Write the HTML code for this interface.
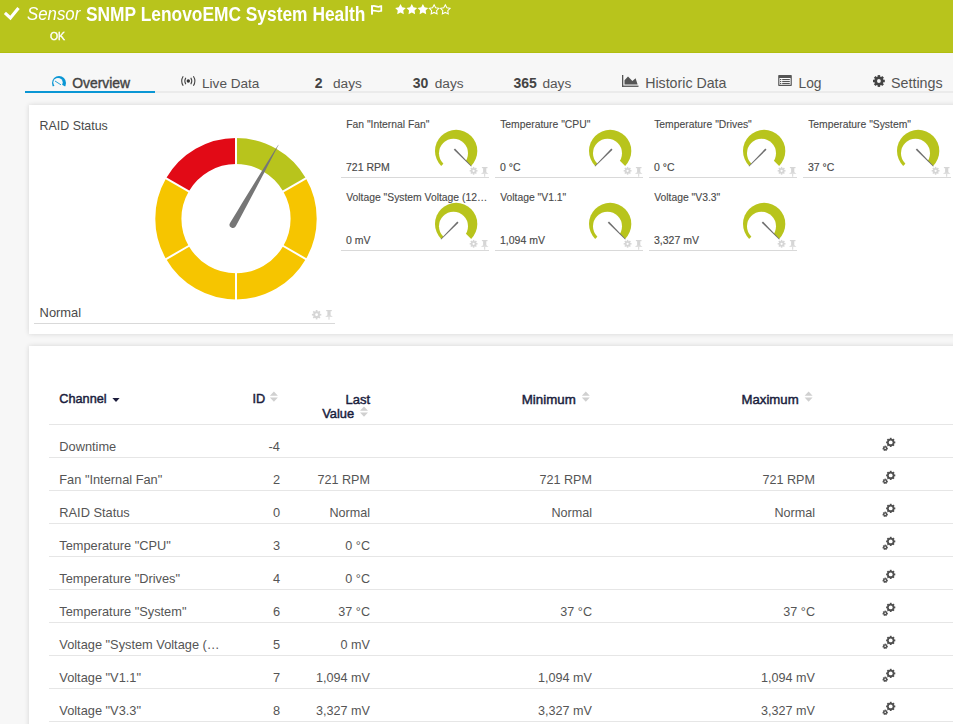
<!DOCTYPE html>
<html><head><meta charset="utf-8"><style>
html,body{margin:0;padding:0;}
body{width:953px;height:724px;overflow:hidden;background:#f7f7f7;position:relative;font-family:"Liberation Sans", sans-serif;}
.t{position:absolute;white-space:nowrap;font-family:"Liberation Sans", sans-serif;}
.panel{position:absolute;background:#fff;box-shadow:0 0 5px rgba(0,0,0,0.14);}
svg.ov{position:absolute;left:0;top:0;}
</style></head><body>
<div class="panel" style="left:29px;top:105px;width:940px;height:229px;"></div>
<div class="panel" style="left:29px;top:346px;width:940px;height:420px;"></div>
<svg class="ov" width="953" height="724" viewBox="0 0 953 724">
<rect x="0" y="0" width="953" height="53" fill="#b8c41c"/><rect x="0" y="52" width="953" height="1" fill="#b1be10"/><path d="M4.9 12.9 L10.4 18.0 L18.5 8.0" fill="none" stroke="#fff" stroke-width="3.1" stroke-linecap="butt" stroke-linejoin="miter"/><rect x="371" y="5.2" width="2" height="9.4" fill="#fff"/><path d="M372.9 6.1 C375 5.3 377 7.3 379 6.7 C380 6.4 380.7 6 381.3 6 V10.8 C380.6 10.9 380 11.4 378.6 11.4 C376.8 11.4 375 10.3 372.9 10.7" fill="none" stroke="#fff" stroke-width="1.7"/><polygon points="400.50,4.10 402.20,7.35 405.83,7.97 403.26,10.60 403.79,14.23 400.50,12.60 397.21,14.23 397.74,10.60 395.17,7.97 398.80,7.35" fill="#fff"/><polygon points="411.80,4.10 413.50,7.35 417.13,7.97 414.56,10.60 415.09,14.23 411.80,12.60 408.51,14.23 409.04,10.60 406.47,7.97 410.10,7.35" fill="#fff"/><polygon points="422.90,4.10 424.60,7.35 428.23,7.97 425.66,10.60 426.19,14.23 422.90,12.60 419.61,14.23 420.14,10.60 417.57,7.97 421.20,7.35" fill="#fff"/><polygon points="434.10,4.85 435.63,7.75 438.86,8.30 436.57,10.65 437.04,13.90 434.10,12.45 431.16,13.90 431.63,10.65 429.34,8.30 432.57,7.75" fill="none" stroke="#fff" stroke-width="1.05"/><polygon points="445.30,4.85 446.83,7.75 450.06,8.30 447.77,10.65 448.24,13.90 445.30,12.45 442.36,13.90 442.83,10.65 440.54,8.30 443.77,7.75" fill="none" stroke="#fff" stroke-width="1.05"/><rect x="25" y="91" width="928" height="2" fill="#ebebeb"/><rect x="25" y="91" width="130" height="2" fill="#0a96d4"/><defs><mask id="ovm" maskUnits="userSpaceOnUse" x="0" y="0" width="953" height="724"><path d="M59 83 L46 90.5 L46 70 L72 70 L72 90.5 Z" fill="#fff"/><circle cx="58" cy="82.6" r="4.7" fill="#000"/></mask></defs><circle cx="59" cy="83" r="7" fill="#0a96d4" mask="url(#ovm)"/><path d="M55.3 81.2 L60.6 84.6" stroke="#0a96d4" stroke-width="0.9" stroke-linecap="round"/><g fill="none" stroke="#444" stroke-width="1.1"><path d="M183.2 76.2 Q180.2 81 183.2 85.8"/><path d="M185.8 77.8 Q183.8 81 185.8 84.2"/><path d="M193.4 76.2 Q196.4 81 193.4 85.8"/><path d="M190.8 77.8 Q192.8 81 190.8 84.2"/></g><circle cx="188.3" cy="81" r="1.7" fill="#333"/><rect x="622" y="75" width="1.3" height="12" fill="#555"/><rect x="622" y="85.6" width="16.5" height="1.3" fill="#555"/><path d="M624.5 84.6 L624.5 80.2 L628 76.4 L632.4 81 L635.6 78.2 L637.6 84.6 Z" fill="#555"/><rect x="778.2" y="75" width="13.6" height="11" rx="0.8" fill="#555"/><rect x="779.4" y="78" width="11.2" height="6.8" fill="#fff"/><g fill="#555"><rect x="780" y="79" width="1.3" height="1.1"/><rect x="780" y="81" width="1.3" height="1.1"/><rect x="780" y="83" width="1.3" height="1.1"/><rect x="782.2" y="79" width="7.6" height="1.1"/><rect x="782.2" y="81" width="7.6" height="1.1"/><rect x="782.2" y="83" width="7.6" height="1.1"/></g><g fill="#444"><circle cx="878.9" cy="81" r="4.6"/><rect x="877.65" y="75.10" width="2.5" height="2.10" transform="rotate(0.0 878.9 81)"/><rect x="877.65" y="75.10" width="2.5" height="2.10" transform="rotate(45.0 878.9 81)"/><rect x="877.65" y="75.10" width="2.5" height="2.10" transform="rotate(90.0 878.9 81)"/><rect x="877.65" y="75.10" width="2.5" height="2.10" transform="rotate(135.0 878.9 81)"/><rect x="877.65" y="75.10" width="2.5" height="2.10" transform="rotate(180.0 878.9 81)"/><rect x="877.65" y="75.10" width="2.5" height="2.10" transform="rotate(225.0 878.9 81)"/><rect x="877.65" y="75.10" width="2.5" height="2.10" transform="rotate(270.0 878.9 81)"/><rect x="877.65" y="75.10" width="2.5" height="2.10" transform="rotate(315.0 878.9 81)"/></g><circle cx="878.9" cy="81" r="1.9" fill="#f7f7f7"/><path d="M236.00 138.00 A80.7 80.7 0 0 1 305.89 178.35 L283.28 191.40 A54.6 54.6 0 0 0 236.00 164.10 Z" fill="#b8c41c"/><path d="M305.89 178.35 A80.7 80.7 0 0 1 305.89 259.05 L283.28 246.00 A54.6 54.6 0 0 0 283.28 191.40 Z" fill="#f6c500"/><path d="M305.89 259.05 A80.7 80.7 0 0 1 236.00 299.40 L236.00 273.30 A54.6 54.6 0 0 0 283.28 246.00 Z" fill="#f6c500"/><path d="M236.00 299.40 A80.7 80.7 0 0 1 166.11 259.05 L188.72 246.00 A54.6 54.6 0 0 0 236.00 273.30 Z" fill="#f6c500"/><path d="M166.11 259.05 A80.7 80.7 0 0 1 166.11 178.35 L188.72 191.40 A54.6 54.6 0 0 0 188.72 246.00 Z" fill="#f6c500"/><path d="M166.11 178.35 A80.7 80.7 0 0 1 236.00 138.00 L236.00 164.10 A54.6 54.6 0 0 0 188.72 191.40 Z" fill="#e20a16"/><line x1="236.00" y1="166.10" x2="236.00" y2="136.00" stroke="#fff" stroke-width="2"/><line x1="281.55" y1="192.40" x2="307.62" y2="177.35" stroke="#fff" stroke-width="2"/><line x1="281.55" y1="245.00" x2="307.62" y2="260.05" stroke="#fff" stroke-width="2"/><line x1="236.00" y1="271.30" x2="236.00" y2="301.40" stroke="#fff" stroke-width="2"/><line x1="190.45" y1="245.00" x2="164.38" y2="260.05" stroke="#fff" stroke-width="2"/><line x1="190.45" y1="192.40" x2="164.38" y2="177.35" stroke="#fff" stroke-width="2"/><path d="M235.78 226.25 L239.38 219.49 L242.97 212.73 L246.56 205.98 L250.14 199.22 L253.72 192.45 L257.30 185.69 L260.87 178.92 L264.43 172.15 L267.98 165.37 L271.53 158.59 L275.05 151.79 L278.50 144.96 L278.30 144.84 L274.17 151.29 L270.11 157.78 L266.07 164.28 L262.04 170.78 L258.02 177.30 L254.00 183.81 L250.00 190.33 L245.99 196.85 L241.99 203.37 L238.00 209.90 L234.01 216.43 L230.02 222.95 A3.3 3.3 0 0 0 235.78 226.25 Z" fill="#767676"/><rect x="34" y="323" width="301" height="1" fill="#d9d9d9"/><g fill="#d6d6d6"><circle cx="316.6" cy="314.7" r="3.4"/><rect x="315.75" y="310.00" width="1.7" height="2.10" transform="rotate(0.0 316.6 314.7)"/><rect x="315.75" y="310.00" width="1.7" height="2.10" transform="rotate(45.0 316.6 314.7)"/><rect x="315.75" y="310.00" width="1.7" height="2.10" transform="rotate(90.0 316.6 314.7)"/><rect x="315.75" y="310.00" width="1.7" height="2.10" transform="rotate(135.0 316.6 314.7)"/><rect x="315.75" y="310.00" width="1.7" height="2.10" transform="rotate(180.0 316.6 314.7)"/><rect x="315.75" y="310.00" width="1.7" height="2.10" transform="rotate(225.0 316.6 314.7)"/><rect x="315.75" y="310.00" width="1.7" height="2.10" transform="rotate(270.0 316.6 314.7)"/><rect x="315.75" y="310.00" width="1.7" height="2.10" transform="rotate(315.0 316.6 314.7)"/></g><circle cx="316.6" cy="314.7" r="1.4" fill="#fff"/><g fill="#d6d6d6"><rect x="326.20" y="310.00" width="5.6" height="1.2"/><rect x="327.40" y="311.00" width="3.2" height="4.6"/><path d="M327.40 315.20 L325.20 316.80 L332.80 316.80 L330.60 315.20 Z"/><rect x="328.50" y="316.80" width="1" height="2.9"/></g><defs><mask id="sgm" maskUnits="userSpaceOnUse" x="-50" y="-50" width="100" height="100"><path d="M0 0 L-40 40 L-40 -40 L40 -40 L40 40 Z" fill="#fff"/><circle cx="-2.65" cy="2.35" r="14.5" fill="#000"/></mask></defs><g transform="translate(456.15 150.95)"><circle cx="0" cy="0" r="21.15" fill="#b8c41c" mask="url(#sgm)"/><path d="M-2.37 -1.17 L14.95 15.45 L15.45 14.95 L-1.17 -2.37 Z" fill="#6e6e6e"/></g><rect x="341" y="177" width="148" height="1" fill="#d9d9d9"/><g fill="#d6d6d6"><circle cx="473.6" cy="170.8" r="2.8"/><rect x="472.85" y="166.90" width="1.5" height="1.90" transform="rotate(0.0 473.6 170.8)"/><rect x="472.85" y="166.90" width="1.5" height="1.90" transform="rotate(45.0 473.6 170.8)"/><rect x="472.85" y="166.90" width="1.5" height="1.90" transform="rotate(90.0 473.6 170.8)"/><rect x="472.85" y="166.90" width="1.5" height="1.90" transform="rotate(135.0 473.6 170.8)"/><rect x="472.85" y="166.90" width="1.5" height="1.90" transform="rotate(180.0 473.6 170.8)"/><rect x="472.85" y="166.90" width="1.5" height="1.90" transform="rotate(225.0 473.6 170.8)"/><rect x="472.85" y="166.90" width="1.5" height="1.90" transform="rotate(270.0 473.6 170.8)"/><rect x="472.85" y="166.90" width="1.5" height="1.90" transform="rotate(315.0 473.6 170.8)"/></g><circle cx="473.6" cy="170.8" r="1.1" fill="#fff"/><g fill="#d6d6d6"><rect x="481.90" y="167.00" width="5.6" height="1.2"/><rect x="483.10" y="168.00" width="3.2" height="4.6"/><path d="M483.10 172.20 L480.90 173.80 L488.50 173.80 L486.30 172.20 Z"/><rect x="484.20" y="173.80" width="1" height="2.9"/></g><g transform="translate(610.15 150.95)"><circle cx="0" cy="0" r="21.15" fill="#b8c41c" mask="url(#sgm)"/><path d="M1.17 -2.37 L-15.45 14.95 L-14.95 15.45 L2.37 -1.17 Z" fill="#6e6e6e"/></g><rect x="495" y="177" width="148" height="1" fill="#d9d9d9"/><g fill="#d6d6d6"><circle cx="627.6" cy="170.8" r="2.8"/><rect x="626.85" y="166.90" width="1.5" height="1.90" transform="rotate(0.0 627.6 170.8)"/><rect x="626.85" y="166.90" width="1.5" height="1.90" transform="rotate(45.0 627.6 170.8)"/><rect x="626.85" y="166.90" width="1.5" height="1.90" transform="rotate(90.0 627.6 170.8)"/><rect x="626.85" y="166.90" width="1.5" height="1.90" transform="rotate(135.0 627.6 170.8)"/><rect x="626.85" y="166.90" width="1.5" height="1.90" transform="rotate(180.0 627.6 170.8)"/><rect x="626.85" y="166.90" width="1.5" height="1.90" transform="rotate(225.0 627.6 170.8)"/><rect x="626.85" y="166.90" width="1.5" height="1.90" transform="rotate(270.0 627.6 170.8)"/><rect x="626.85" y="166.90" width="1.5" height="1.90" transform="rotate(315.0 627.6 170.8)"/></g><circle cx="627.6" cy="170.8" r="1.1" fill="#fff"/><g fill="#d6d6d6"><rect x="635.90" y="167.00" width="5.6" height="1.2"/><rect x="637.10" y="168.00" width="3.2" height="4.6"/><path d="M637.10 172.20 L634.90 173.80 L642.50 173.80 L640.30 172.20 Z"/><rect x="638.20" y="173.80" width="1" height="2.9"/></g><g transform="translate(764.15 150.95)"><circle cx="0" cy="0" r="21.15" fill="#b8c41c" mask="url(#sgm)"/><path d="M1.17 -2.37 L-15.45 14.95 L-14.95 15.45 L2.37 -1.17 Z" fill="#6e6e6e"/></g><rect x="649" y="177" width="148" height="1" fill="#d9d9d9"/><g fill="#d6d6d6"><circle cx="781.6" cy="170.8" r="2.8"/><rect x="780.85" y="166.90" width="1.5" height="1.90" transform="rotate(0.0 781.6 170.8)"/><rect x="780.85" y="166.90" width="1.5" height="1.90" transform="rotate(45.0 781.6 170.8)"/><rect x="780.85" y="166.90" width="1.5" height="1.90" transform="rotate(90.0 781.6 170.8)"/><rect x="780.85" y="166.90" width="1.5" height="1.90" transform="rotate(135.0 781.6 170.8)"/><rect x="780.85" y="166.90" width="1.5" height="1.90" transform="rotate(180.0 781.6 170.8)"/><rect x="780.85" y="166.90" width="1.5" height="1.90" transform="rotate(225.0 781.6 170.8)"/><rect x="780.85" y="166.90" width="1.5" height="1.90" transform="rotate(270.0 781.6 170.8)"/><rect x="780.85" y="166.90" width="1.5" height="1.90" transform="rotate(315.0 781.6 170.8)"/></g><circle cx="781.6" cy="170.8" r="1.1" fill="#fff"/><g fill="#d6d6d6"><rect x="789.90" y="167.00" width="5.6" height="1.2"/><rect x="791.10" y="168.00" width="3.2" height="4.6"/><path d="M791.10 172.20 L788.90 173.80 L796.50 173.80 L794.30 172.20 Z"/><rect x="792.20" y="173.80" width="1" height="2.9"/></g><g transform="translate(918.15 150.95)"><circle cx="0" cy="0" r="21.15" fill="#b8c41c" mask="url(#sgm)"/><path d="M-2.37 -1.17 L14.95 15.45 L15.45 14.95 L-1.17 -2.37 Z" fill="#6e6e6e"/></g><rect x="803" y="177" width="148" height="1" fill="#d9d9d9"/><g fill="#d6d6d6"><circle cx="935.6" cy="170.8" r="2.8"/><rect x="934.85" y="166.90" width="1.5" height="1.90" transform="rotate(0.0 935.6 170.8)"/><rect x="934.85" y="166.90" width="1.5" height="1.90" transform="rotate(45.0 935.6 170.8)"/><rect x="934.85" y="166.90" width="1.5" height="1.90" transform="rotate(90.0 935.6 170.8)"/><rect x="934.85" y="166.90" width="1.5" height="1.90" transform="rotate(135.0 935.6 170.8)"/><rect x="934.85" y="166.90" width="1.5" height="1.90" transform="rotate(180.0 935.6 170.8)"/><rect x="934.85" y="166.90" width="1.5" height="1.90" transform="rotate(225.0 935.6 170.8)"/><rect x="934.85" y="166.90" width="1.5" height="1.90" transform="rotate(270.0 935.6 170.8)"/><rect x="934.85" y="166.90" width="1.5" height="1.90" transform="rotate(315.0 935.6 170.8)"/></g><circle cx="935.6" cy="170.8" r="1.1" fill="#fff"/><g fill="#d6d6d6"><rect x="943.90" y="167.00" width="5.6" height="1.2"/><rect x="945.10" y="168.00" width="3.2" height="4.6"/><path d="M945.10 172.20 L942.90 173.80 L950.50 173.80 L948.30 172.20 Z"/><rect x="946.20" y="173.80" width="1" height="2.9"/></g><g transform="translate(456.15 223.95)"><circle cx="0" cy="0" r="21.15" fill="#b8c41c" mask="url(#sgm)"/><path d="M1.17 -2.37 L-15.45 14.95 L-14.95 15.45 L2.37 -1.17 Z" fill="#6e6e6e"/></g><rect x="341" y="250" width="148" height="1" fill="#d9d9d9"/><g fill="#d6d6d6"><circle cx="473.6" cy="243.8" r="2.8"/><rect x="472.85" y="239.90" width="1.5" height="1.90" transform="rotate(0.0 473.6 243.8)"/><rect x="472.85" y="239.90" width="1.5" height="1.90" transform="rotate(45.0 473.6 243.8)"/><rect x="472.85" y="239.90" width="1.5" height="1.90" transform="rotate(90.0 473.6 243.8)"/><rect x="472.85" y="239.90" width="1.5" height="1.90" transform="rotate(135.0 473.6 243.8)"/><rect x="472.85" y="239.90" width="1.5" height="1.90" transform="rotate(180.0 473.6 243.8)"/><rect x="472.85" y="239.90" width="1.5" height="1.90" transform="rotate(225.0 473.6 243.8)"/><rect x="472.85" y="239.90" width="1.5" height="1.90" transform="rotate(270.0 473.6 243.8)"/><rect x="472.85" y="239.90" width="1.5" height="1.90" transform="rotate(315.0 473.6 243.8)"/></g><circle cx="473.6" cy="243.8" r="1.1" fill="#fff"/><g fill="#d6d6d6"><rect x="481.90" y="240.00" width="5.6" height="1.2"/><rect x="483.10" y="241.00" width="3.2" height="4.6"/><path d="M483.10 245.20 L480.90 246.80 L488.50 246.80 L486.30 245.20 Z"/><rect x="484.20" y="246.80" width="1" height="2.9"/></g><g transform="translate(610.15 223.95)"><circle cx="0" cy="0" r="21.15" fill="#b8c41c" mask="url(#sgm)"/><path d="M-2.37 -1.17 L14.95 15.45 L15.45 14.95 L-1.17 -2.37 Z" fill="#6e6e6e"/></g><rect x="495" y="250" width="148" height="1" fill="#d9d9d9"/><g fill="#d6d6d6"><circle cx="627.6" cy="243.8" r="2.8"/><rect x="626.85" y="239.90" width="1.5" height="1.90" transform="rotate(0.0 627.6 243.8)"/><rect x="626.85" y="239.90" width="1.5" height="1.90" transform="rotate(45.0 627.6 243.8)"/><rect x="626.85" y="239.90" width="1.5" height="1.90" transform="rotate(90.0 627.6 243.8)"/><rect x="626.85" y="239.90" width="1.5" height="1.90" transform="rotate(135.0 627.6 243.8)"/><rect x="626.85" y="239.90" width="1.5" height="1.90" transform="rotate(180.0 627.6 243.8)"/><rect x="626.85" y="239.90" width="1.5" height="1.90" transform="rotate(225.0 627.6 243.8)"/><rect x="626.85" y="239.90" width="1.5" height="1.90" transform="rotate(270.0 627.6 243.8)"/><rect x="626.85" y="239.90" width="1.5" height="1.90" transform="rotate(315.0 627.6 243.8)"/></g><circle cx="627.6" cy="243.8" r="1.1" fill="#fff"/><g fill="#d6d6d6"><rect x="635.90" y="240.00" width="5.6" height="1.2"/><rect x="637.10" y="241.00" width="3.2" height="4.6"/><path d="M637.10 245.20 L634.90 246.80 L642.50 246.80 L640.30 245.20 Z"/><rect x="638.20" y="246.80" width="1" height="2.9"/></g><g transform="translate(764.15 223.95)"><circle cx="0" cy="0" r="21.15" fill="#b8c41c" mask="url(#sgm)"/><path d="M-2.37 -1.17 L14.95 15.45 L15.45 14.95 L-1.17 -2.37 Z" fill="#6e6e6e"/></g><rect x="649" y="250" width="148" height="1" fill="#d9d9d9"/><g fill="#d6d6d6"><circle cx="781.6" cy="243.8" r="2.8"/><rect x="780.85" y="239.90" width="1.5" height="1.90" transform="rotate(0.0 781.6 243.8)"/><rect x="780.85" y="239.90" width="1.5" height="1.90" transform="rotate(45.0 781.6 243.8)"/><rect x="780.85" y="239.90" width="1.5" height="1.90" transform="rotate(90.0 781.6 243.8)"/><rect x="780.85" y="239.90" width="1.5" height="1.90" transform="rotate(135.0 781.6 243.8)"/><rect x="780.85" y="239.90" width="1.5" height="1.90" transform="rotate(180.0 781.6 243.8)"/><rect x="780.85" y="239.90" width="1.5" height="1.90" transform="rotate(225.0 781.6 243.8)"/><rect x="780.85" y="239.90" width="1.5" height="1.90" transform="rotate(270.0 781.6 243.8)"/><rect x="780.85" y="239.90" width="1.5" height="1.90" transform="rotate(315.0 781.6 243.8)"/></g><circle cx="781.6" cy="243.8" r="1.1" fill="#fff"/><g fill="#d6d6d6"><rect x="789.90" y="240.00" width="5.6" height="1.2"/><rect x="791.10" y="241.00" width="3.2" height="4.6"/><path d="M791.10 245.20 L788.90 246.80 L796.50 246.80 L794.30 245.20 Z"/><rect x="792.20" y="246.80" width="1" height="2.9"/></g><path d="M112.4 398 L119.6 398 L116 402 Z" fill="#1c1c3c"/><path d="M273.9 391.4 L277.9 395.7 L269.9 395.7 Z M269.9 397.4 L277.9 397.4 L273.9 401.7 Z" fill="#d0d0d0"/><path d="M364 406.4 L368 410.7 L360 410.7 Z M360 412.4 L368 412.4 L364 416.7 Z" fill="#d0d0d0"/><path d="M585.8 391.4 L589.8 395.7 L581.8 395.7 Z M581.8 397.4 L589.8 397.4 L585.8 401.7 Z" fill="#d0d0d0"/><path d="M808.6 391.4 L812.6 395.7 L804.6 395.7 Z M804.6 397.4 L812.6 397.4 L808.6 401.7 Z" fill="#d0d0d0"/><rect x="49" y="424" width="904" height="1" fill="#e6e6e6"/><rect x="49" y="457" width="904" height="1" fill="#e6e6e6"/><g fill="#505050"><circle cx="890.7" cy="442.4" r="3.7"/><rect x="889.80" y="437.80" width="1.8" height="1.70" transform="rotate(0.0 890.7 442.4)"/><rect x="889.80" y="437.80" width="1.8" height="1.70" transform="rotate(45.0 890.7 442.4)"/><rect x="889.80" y="437.80" width="1.8" height="1.70" transform="rotate(90.0 890.7 442.4)"/><rect x="889.80" y="437.80" width="1.8" height="1.70" transform="rotate(135.0 890.7 442.4)"/><rect x="889.80" y="437.80" width="1.8" height="1.70" transform="rotate(180.0 890.7 442.4)"/><rect x="889.80" y="437.80" width="1.8" height="1.70" transform="rotate(225.0 890.7 442.4)"/><rect x="889.80" y="437.80" width="1.8" height="1.70" transform="rotate(270.0 890.7 442.4)"/><rect x="889.80" y="437.80" width="1.8" height="1.70" transform="rotate(315.0 890.7 442.4)"/></g><circle cx="890.7" cy="442.4" r="1.9" fill="#fff"/><g fill="#505050"><circle cx="885.2" cy="448.29999999999995" r="2.1"/><rect x="884.60" y="445.60" width="1.2" height="1.40" transform="rotate(0.0 885.2 448.29999999999995)"/><rect x="884.60" y="445.60" width="1.2" height="1.40" transform="rotate(51.42857142857143 885.2 448.29999999999995)"/><rect x="884.60" y="445.60" width="1.2" height="1.40" transform="rotate(102.85714285714286 885.2 448.29999999999995)"/><rect x="884.60" y="445.60" width="1.2" height="1.40" transform="rotate(154.28571428571428 885.2 448.29999999999995)"/><rect x="884.60" y="445.60" width="1.2" height="1.40" transform="rotate(205.71428571428572 885.2 448.29999999999995)"/><rect x="884.60" y="445.60" width="1.2" height="1.40" transform="rotate(257.14285714285717 885.2 448.29999999999995)"/><rect x="884.60" y="445.60" width="1.2" height="1.40" transform="rotate(308.57142857142856 885.2 448.29999999999995)"/></g><circle cx="885.2" cy="448.29999999999995" r="0.8" fill="#fff"/><rect x="49" y="490" width="904" height="1" fill="#e6e6e6"/><g fill="#505050"><circle cx="890.7" cy="475.4" r="3.7"/><rect x="889.80" y="470.80" width="1.8" height="1.70" transform="rotate(0.0 890.7 475.4)"/><rect x="889.80" y="470.80" width="1.8" height="1.70" transform="rotate(45.0 890.7 475.4)"/><rect x="889.80" y="470.80" width="1.8" height="1.70" transform="rotate(90.0 890.7 475.4)"/><rect x="889.80" y="470.80" width="1.8" height="1.70" transform="rotate(135.0 890.7 475.4)"/><rect x="889.80" y="470.80" width="1.8" height="1.70" transform="rotate(180.0 890.7 475.4)"/><rect x="889.80" y="470.80" width="1.8" height="1.70" transform="rotate(225.0 890.7 475.4)"/><rect x="889.80" y="470.80" width="1.8" height="1.70" transform="rotate(270.0 890.7 475.4)"/><rect x="889.80" y="470.80" width="1.8" height="1.70" transform="rotate(315.0 890.7 475.4)"/></g><circle cx="890.7" cy="475.4" r="1.9" fill="#fff"/><g fill="#505050"><circle cx="885.2" cy="481.29999999999995" r="2.1"/><rect x="884.60" y="478.60" width="1.2" height="1.40" transform="rotate(0.0 885.2 481.29999999999995)"/><rect x="884.60" y="478.60" width="1.2" height="1.40" transform="rotate(51.42857142857143 885.2 481.29999999999995)"/><rect x="884.60" y="478.60" width="1.2" height="1.40" transform="rotate(102.85714285714286 885.2 481.29999999999995)"/><rect x="884.60" y="478.60" width="1.2" height="1.40" transform="rotate(154.28571428571428 885.2 481.29999999999995)"/><rect x="884.60" y="478.60" width="1.2" height="1.40" transform="rotate(205.71428571428572 885.2 481.29999999999995)"/><rect x="884.60" y="478.60" width="1.2" height="1.40" transform="rotate(257.14285714285717 885.2 481.29999999999995)"/><rect x="884.60" y="478.60" width="1.2" height="1.40" transform="rotate(308.57142857142856 885.2 481.29999999999995)"/></g><circle cx="885.2" cy="481.29999999999995" r="0.8" fill="#fff"/><rect x="49" y="523" width="904" height="1" fill="#e6e6e6"/><g fill="#505050"><circle cx="890.7" cy="508.4" r="3.7"/><rect x="889.80" y="503.80" width="1.8" height="1.70" transform="rotate(0.0 890.7 508.4)"/><rect x="889.80" y="503.80" width="1.8" height="1.70" transform="rotate(45.0 890.7 508.4)"/><rect x="889.80" y="503.80" width="1.8" height="1.70" transform="rotate(90.0 890.7 508.4)"/><rect x="889.80" y="503.80" width="1.8" height="1.70" transform="rotate(135.0 890.7 508.4)"/><rect x="889.80" y="503.80" width="1.8" height="1.70" transform="rotate(180.0 890.7 508.4)"/><rect x="889.80" y="503.80" width="1.8" height="1.70" transform="rotate(225.0 890.7 508.4)"/><rect x="889.80" y="503.80" width="1.8" height="1.70" transform="rotate(270.0 890.7 508.4)"/><rect x="889.80" y="503.80" width="1.8" height="1.70" transform="rotate(315.0 890.7 508.4)"/></g><circle cx="890.7" cy="508.4" r="1.9" fill="#fff"/><g fill="#505050"><circle cx="885.2" cy="514.3" r="2.1"/><rect x="884.60" y="511.60" width="1.2" height="1.40" transform="rotate(0.0 885.2 514.3)"/><rect x="884.60" y="511.60" width="1.2" height="1.40" transform="rotate(51.42857142857143 885.2 514.3)"/><rect x="884.60" y="511.60" width="1.2" height="1.40" transform="rotate(102.85714285714286 885.2 514.3)"/><rect x="884.60" y="511.60" width="1.2" height="1.40" transform="rotate(154.28571428571428 885.2 514.3)"/><rect x="884.60" y="511.60" width="1.2" height="1.40" transform="rotate(205.71428571428572 885.2 514.3)"/><rect x="884.60" y="511.60" width="1.2" height="1.40" transform="rotate(257.14285714285717 885.2 514.3)"/><rect x="884.60" y="511.60" width="1.2" height="1.40" transform="rotate(308.57142857142856 885.2 514.3)"/></g><circle cx="885.2" cy="514.3" r="0.8" fill="#fff"/><rect x="49" y="556" width="904" height="1" fill="#e6e6e6"/><g fill="#505050"><circle cx="890.7" cy="541.4" r="3.7"/><rect x="889.80" y="536.80" width="1.8" height="1.70" transform="rotate(0.0 890.7 541.4)"/><rect x="889.80" y="536.80" width="1.8" height="1.70" transform="rotate(45.0 890.7 541.4)"/><rect x="889.80" y="536.80" width="1.8" height="1.70" transform="rotate(90.0 890.7 541.4)"/><rect x="889.80" y="536.80" width="1.8" height="1.70" transform="rotate(135.0 890.7 541.4)"/><rect x="889.80" y="536.80" width="1.8" height="1.70" transform="rotate(180.0 890.7 541.4)"/><rect x="889.80" y="536.80" width="1.8" height="1.70" transform="rotate(225.0 890.7 541.4)"/><rect x="889.80" y="536.80" width="1.8" height="1.70" transform="rotate(270.0 890.7 541.4)"/><rect x="889.80" y="536.80" width="1.8" height="1.70" transform="rotate(315.0 890.7 541.4)"/></g><circle cx="890.7" cy="541.4" r="1.9" fill="#fff"/><g fill="#505050"><circle cx="885.2" cy="547.3" r="2.1"/><rect x="884.60" y="544.60" width="1.2" height="1.40" transform="rotate(0.0 885.2 547.3)"/><rect x="884.60" y="544.60" width="1.2" height="1.40" transform="rotate(51.42857142857143 885.2 547.3)"/><rect x="884.60" y="544.60" width="1.2" height="1.40" transform="rotate(102.85714285714286 885.2 547.3)"/><rect x="884.60" y="544.60" width="1.2" height="1.40" transform="rotate(154.28571428571428 885.2 547.3)"/><rect x="884.60" y="544.60" width="1.2" height="1.40" transform="rotate(205.71428571428572 885.2 547.3)"/><rect x="884.60" y="544.60" width="1.2" height="1.40" transform="rotate(257.14285714285717 885.2 547.3)"/><rect x="884.60" y="544.60" width="1.2" height="1.40" transform="rotate(308.57142857142856 885.2 547.3)"/></g><circle cx="885.2" cy="547.3" r="0.8" fill="#fff"/><rect x="49" y="589" width="904" height="1" fill="#e6e6e6"/><g fill="#505050"><circle cx="890.7" cy="574.4" r="3.7"/><rect x="889.80" y="569.80" width="1.8" height="1.70" transform="rotate(0.0 890.7 574.4)"/><rect x="889.80" y="569.80" width="1.8" height="1.70" transform="rotate(45.0 890.7 574.4)"/><rect x="889.80" y="569.80" width="1.8" height="1.70" transform="rotate(90.0 890.7 574.4)"/><rect x="889.80" y="569.80" width="1.8" height="1.70" transform="rotate(135.0 890.7 574.4)"/><rect x="889.80" y="569.80" width="1.8" height="1.70" transform="rotate(180.0 890.7 574.4)"/><rect x="889.80" y="569.80" width="1.8" height="1.70" transform="rotate(225.0 890.7 574.4)"/><rect x="889.80" y="569.80" width="1.8" height="1.70" transform="rotate(270.0 890.7 574.4)"/><rect x="889.80" y="569.80" width="1.8" height="1.70" transform="rotate(315.0 890.7 574.4)"/></g><circle cx="890.7" cy="574.4" r="1.9" fill="#fff"/><g fill="#505050"><circle cx="885.2" cy="580.3" r="2.1"/><rect x="884.60" y="577.60" width="1.2" height="1.40" transform="rotate(0.0 885.2 580.3)"/><rect x="884.60" y="577.60" width="1.2" height="1.40" transform="rotate(51.42857142857143 885.2 580.3)"/><rect x="884.60" y="577.60" width="1.2" height="1.40" transform="rotate(102.85714285714286 885.2 580.3)"/><rect x="884.60" y="577.60" width="1.2" height="1.40" transform="rotate(154.28571428571428 885.2 580.3)"/><rect x="884.60" y="577.60" width="1.2" height="1.40" transform="rotate(205.71428571428572 885.2 580.3)"/><rect x="884.60" y="577.60" width="1.2" height="1.40" transform="rotate(257.14285714285717 885.2 580.3)"/><rect x="884.60" y="577.60" width="1.2" height="1.40" transform="rotate(308.57142857142856 885.2 580.3)"/></g><circle cx="885.2" cy="580.3" r="0.8" fill="#fff"/><rect x="49" y="622" width="904" height="1" fill="#e6e6e6"/><g fill="#505050"><circle cx="890.7" cy="607.4" r="3.7"/><rect x="889.80" y="602.80" width="1.8" height="1.70" transform="rotate(0.0 890.7 607.4)"/><rect x="889.80" y="602.80" width="1.8" height="1.70" transform="rotate(45.0 890.7 607.4)"/><rect x="889.80" y="602.80" width="1.8" height="1.70" transform="rotate(90.0 890.7 607.4)"/><rect x="889.80" y="602.80" width="1.8" height="1.70" transform="rotate(135.0 890.7 607.4)"/><rect x="889.80" y="602.80" width="1.8" height="1.70" transform="rotate(180.0 890.7 607.4)"/><rect x="889.80" y="602.80" width="1.8" height="1.70" transform="rotate(225.0 890.7 607.4)"/><rect x="889.80" y="602.80" width="1.8" height="1.70" transform="rotate(270.0 890.7 607.4)"/><rect x="889.80" y="602.80" width="1.8" height="1.70" transform="rotate(315.0 890.7 607.4)"/></g><circle cx="890.7" cy="607.4" r="1.9" fill="#fff"/><g fill="#505050"><circle cx="885.2" cy="613.3" r="2.1"/><rect x="884.60" y="610.60" width="1.2" height="1.40" transform="rotate(0.0 885.2 613.3)"/><rect x="884.60" y="610.60" width="1.2" height="1.40" transform="rotate(51.42857142857143 885.2 613.3)"/><rect x="884.60" y="610.60" width="1.2" height="1.40" transform="rotate(102.85714285714286 885.2 613.3)"/><rect x="884.60" y="610.60" width="1.2" height="1.40" transform="rotate(154.28571428571428 885.2 613.3)"/><rect x="884.60" y="610.60" width="1.2" height="1.40" transform="rotate(205.71428571428572 885.2 613.3)"/><rect x="884.60" y="610.60" width="1.2" height="1.40" transform="rotate(257.14285714285717 885.2 613.3)"/><rect x="884.60" y="610.60" width="1.2" height="1.40" transform="rotate(308.57142857142856 885.2 613.3)"/></g><circle cx="885.2" cy="613.3" r="0.8" fill="#fff"/><rect x="49" y="655" width="904" height="1" fill="#e6e6e6"/><g fill="#505050"><circle cx="890.7" cy="640.4" r="3.7"/><rect x="889.80" y="635.80" width="1.8" height="1.70" transform="rotate(0.0 890.7 640.4)"/><rect x="889.80" y="635.80" width="1.8" height="1.70" transform="rotate(45.0 890.7 640.4)"/><rect x="889.80" y="635.80" width="1.8" height="1.70" transform="rotate(90.0 890.7 640.4)"/><rect x="889.80" y="635.80" width="1.8" height="1.70" transform="rotate(135.0 890.7 640.4)"/><rect x="889.80" y="635.80" width="1.8" height="1.70" transform="rotate(180.0 890.7 640.4)"/><rect x="889.80" y="635.80" width="1.8" height="1.70" transform="rotate(225.0 890.7 640.4)"/><rect x="889.80" y="635.80" width="1.8" height="1.70" transform="rotate(270.0 890.7 640.4)"/><rect x="889.80" y="635.80" width="1.8" height="1.70" transform="rotate(315.0 890.7 640.4)"/></g><circle cx="890.7" cy="640.4" r="1.9" fill="#fff"/><g fill="#505050"><circle cx="885.2" cy="646.3" r="2.1"/><rect x="884.60" y="643.60" width="1.2" height="1.40" transform="rotate(0.0 885.2 646.3)"/><rect x="884.60" y="643.60" width="1.2" height="1.40" transform="rotate(51.42857142857143 885.2 646.3)"/><rect x="884.60" y="643.60" width="1.2" height="1.40" transform="rotate(102.85714285714286 885.2 646.3)"/><rect x="884.60" y="643.60" width="1.2" height="1.40" transform="rotate(154.28571428571428 885.2 646.3)"/><rect x="884.60" y="643.60" width="1.2" height="1.40" transform="rotate(205.71428571428572 885.2 646.3)"/><rect x="884.60" y="643.60" width="1.2" height="1.40" transform="rotate(257.14285714285717 885.2 646.3)"/><rect x="884.60" y="643.60" width="1.2" height="1.40" transform="rotate(308.57142857142856 885.2 646.3)"/></g><circle cx="885.2" cy="646.3" r="0.8" fill="#fff"/><rect x="49" y="688" width="904" height="1" fill="#e6e6e6"/><g fill="#505050"><circle cx="890.7" cy="673.4" r="3.7"/><rect x="889.80" y="668.80" width="1.8" height="1.70" transform="rotate(0.0 890.7 673.4)"/><rect x="889.80" y="668.80" width="1.8" height="1.70" transform="rotate(45.0 890.7 673.4)"/><rect x="889.80" y="668.80" width="1.8" height="1.70" transform="rotate(90.0 890.7 673.4)"/><rect x="889.80" y="668.80" width="1.8" height="1.70" transform="rotate(135.0 890.7 673.4)"/><rect x="889.80" y="668.80" width="1.8" height="1.70" transform="rotate(180.0 890.7 673.4)"/><rect x="889.80" y="668.80" width="1.8" height="1.70" transform="rotate(225.0 890.7 673.4)"/><rect x="889.80" y="668.80" width="1.8" height="1.70" transform="rotate(270.0 890.7 673.4)"/><rect x="889.80" y="668.80" width="1.8" height="1.70" transform="rotate(315.0 890.7 673.4)"/></g><circle cx="890.7" cy="673.4" r="1.9" fill="#fff"/><g fill="#505050"><circle cx="885.2" cy="679.3" r="2.1"/><rect x="884.60" y="676.60" width="1.2" height="1.40" transform="rotate(0.0 885.2 679.3)"/><rect x="884.60" y="676.60" width="1.2" height="1.40" transform="rotate(51.42857142857143 885.2 679.3)"/><rect x="884.60" y="676.60" width="1.2" height="1.40" transform="rotate(102.85714285714286 885.2 679.3)"/><rect x="884.60" y="676.60" width="1.2" height="1.40" transform="rotate(154.28571428571428 885.2 679.3)"/><rect x="884.60" y="676.60" width="1.2" height="1.40" transform="rotate(205.71428571428572 885.2 679.3)"/><rect x="884.60" y="676.60" width="1.2" height="1.40" transform="rotate(257.14285714285717 885.2 679.3)"/><rect x="884.60" y="676.60" width="1.2" height="1.40" transform="rotate(308.57142857142856 885.2 679.3)"/></g><circle cx="885.2" cy="679.3" r="0.8" fill="#fff"/><rect x="49" y="721" width="904" height="1" fill="#e6e6e6"/><g fill="#505050"><circle cx="890.7" cy="706.4" r="3.7"/><rect x="889.80" y="701.80" width="1.8" height="1.70" transform="rotate(0.0 890.7 706.4)"/><rect x="889.80" y="701.80" width="1.8" height="1.70" transform="rotate(45.0 890.7 706.4)"/><rect x="889.80" y="701.80" width="1.8" height="1.70" transform="rotate(90.0 890.7 706.4)"/><rect x="889.80" y="701.80" width="1.8" height="1.70" transform="rotate(135.0 890.7 706.4)"/><rect x="889.80" y="701.80" width="1.8" height="1.70" transform="rotate(180.0 890.7 706.4)"/><rect x="889.80" y="701.80" width="1.8" height="1.70" transform="rotate(225.0 890.7 706.4)"/><rect x="889.80" y="701.80" width="1.8" height="1.70" transform="rotate(270.0 890.7 706.4)"/><rect x="889.80" y="701.80" width="1.8" height="1.70" transform="rotate(315.0 890.7 706.4)"/></g><circle cx="890.7" cy="706.4" r="1.9" fill="#fff"/><g fill="#505050"><circle cx="885.2" cy="712.3" r="2.1"/><rect x="884.60" y="709.60" width="1.2" height="1.40" transform="rotate(0.0 885.2 712.3)"/><rect x="884.60" y="709.60" width="1.2" height="1.40" transform="rotate(51.42857142857143 885.2 712.3)"/><rect x="884.60" y="709.60" width="1.2" height="1.40" transform="rotate(102.85714285714286 885.2 712.3)"/><rect x="884.60" y="709.60" width="1.2" height="1.40" transform="rotate(154.28571428571428 885.2 712.3)"/><rect x="884.60" y="709.60" width="1.2" height="1.40" transform="rotate(205.71428571428572 885.2 712.3)"/><rect x="884.60" y="709.60" width="1.2" height="1.40" transform="rotate(257.14285714285717 885.2 712.3)"/><rect x="884.60" y="709.60" width="1.2" height="1.40" transform="rotate(308.57142857142856 885.2 712.3)"/></g><circle cx="885.2" cy="712.3" r="0.8" fill="#fff"/>
</svg>
<div class="t" style="left:27.40px;top:5.06px;font-size:18.6px;line-height:18.6px;color:#fff;font-weight:normal;font-style:italic;letter-spacing:0px;transform:scaleX(0.905);transform-origin:0 0;">Sensor</div><div class="t" style="left:86.40px;top:4.71px;font-size:19.6px;line-height:19.6px;color:#fff;font-weight:bold;font-style:normal;letter-spacing:0px;transform:scaleX(0.886);transform-origin:0 0;">SNMP LenovoEMC System Health</div><div class="t" style="left:50.20px;top:30.28px;font-size:11.6px;line-height:11.6px;color:#fff;font-weight:normal;font-style:normal;letter-spacing:0px;-webkit-text-stroke:0.4px #fff;transform:scaleX(0.9);transform-origin:0 0;">OK</div><div class="t" style="left:72.20px;top:76.53px;font-size:13.9px;line-height:13.9px;color:#444;font-weight:normal;font-style:normal;letter-spacing:0px;-webkit-text-stroke:0.4px #444;">Overview</div><div class="t" style="left:202.00px;top:76.79px;font-size:13.6px;line-height:13.6px;color:#555;font-weight:normal;font-style:normal;letter-spacing:0px;">Live Data</div><div class="t" style="left:314.80px;top:76.45px;font-size:14px;line-height:14px;color:#444;font-weight:bold;font-style:normal;letter-spacing:0px;">2</div><div class="t" style="left:333.00px;top:76.70px;font-size:13.7px;line-height:13.7px;color:#555;font-weight:normal;font-style:normal;letter-spacing:0px;">days</div><div class="t" style="left:412.70px;top:76.45px;font-size:14px;line-height:14px;color:#444;font-weight:bold;font-style:normal;letter-spacing:0px;">30</div><div class="t" style="left:434.70px;top:76.70px;font-size:13.7px;line-height:13.7px;color:#555;font-weight:normal;font-style:normal;letter-spacing:0px;">days</div><div class="t" style="left:513.40px;top:76.45px;font-size:14px;line-height:14px;color:#444;font-weight:bold;font-style:normal;letter-spacing:0px;">365</div><div class="t" style="left:542.40px;top:76.70px;font-size:13.7px;line-height:13.7px;color:#555;font-weight:normal;font-style:normal;letter-spacing:0px;">days</div><div class="t" style="left:645.20px;top:76.28px;font-size:14.2px;line-height:14.2px;color:#555;font-weight:normal;font-style:normal;letter-spacing:0px;">Historic Data</div><div class="t" style="left:798.50px;top:76.62px;font-size:13.8px;line-height:13.8px;color:#555;font-weight:normal;font-style:normal;letter-spacing:0px;">Log</div><div class="t" style="left:891.00px;top:76.20px;font-size:14.3px;line-height:14.3px;color:#555;font-weight:normal;font-style:normal;letter-spacing:0px;">Settings</div><div class="t" style="left:39.60px;top:119.90px;font-size:12.4px;line-height:12.4px;color:#4a4a4a;font-weight:normal;font-style:normal;letter-spacing:0px;">RAID Status</div><div class="t" style="left:39.60px;top:306.58px;font-size:12.9px;line-height:12.9px;color:#4a4a4a;font-weight:normal;font-style:normal;letter-spacing:0px;">Normal</div><div class="t" style="left:346.20px;top:120.34px;font-size:10.35px;line-height:10.35px;color:#4a4a4a;font-weight:normal;font-style:normal;letter-spacing:0px;-webkit-text-stroke:0.12px #4a4a4a;">Fan "Internal Fan"</div><div class="t" style="left:346.00px;top:162.41px;font-size:10.5px;line-height:10.5px;color:#4a4a4a;font-weight:normal;font-style:normal;letter-spacing:0px;-webkit-text-stroke:0.15px #4a4a4a;">721 RPM</div><div class="t" style="left:500.20px;top:120.34px;font-size:10.35px;line-height:10.35px;color:#4a4a4a;font-weight:normal;font-style:normal;letter-spacing:0px;-webkit-text-stroke:0.12px #4a4a4a;">Temperature "CPU"</div><div class="t" style="left:500.00px;top:162.41px;font-size:10.5px;line-height:10.5px;color:#4a4a4a;font-weight:normal;font-style:normal;letter-spacing:0px;-webkit-text-stroke:0.15px #4a4a4a;">0 °C</div><div class="t" style="left:654.20px;top:120.34px;font-size:10.35px;line-height:10.35px;color:#4a4a4a;font-weight:normal;font-style:normal;letter-spacing:0px;-webkit-text-stroke:0.12px #4a4a4a;">Temperature "Drives"</div><div class="t" style="left:654.00px;top:162.41px;font-size:10.5px;line-height:10.5px;color:#4a4a4a;font-weight:normal;font-style:normal;letter-spacing:0px;-webkit-text-stroke:0.15px #4a4a4a;">0 °C</div><div class="t" style="left:808.20px;top:120.34px;font-size:10.35px;line-height:10.35px;color:#4a4a4a;font-weight:normal;font-style:normal;letter-spacing:0px;-webkit-text-stroke:0.12px #4a4a4a;">Temperature "System"</div><div class="t" style="left:808.00px;top:162.41px;font-size:10.5px;line-height:10.5px;color:#4a4a4a;font-weight:normal;font-style:normal;letter-spacing:0px;-webkit-text-stroke:0.15px #4a4a4a;">37 °C</div><div class="t" style="left:346.20px;top:193.34px;font-size:10.35px;line-height:10.35px;color:#4a4a4a;font-weight:normal;font-style:normal;letter-spacing:0px;-webkit-text-stroke:0.12px #4a4a4a;">Voltage "System Voltage (12…</div><div class="t" style="left:346.00px;top:235.41px;font-size:10.5px;line-height:10.5px;color:#4a4a4a;font-weight:normal;font-style:normal;letter-spacing:0px;-webkit-text-stroke:0.15px #4a4a4a;">0 mV</div><div class="t" style="left:500.20px;top:193.34px;font-size:10.35px;line-height:10.35px;color:#4a4a4a;font-weight:normal;font-style:normal;letter-spacing:0px;-webkit-text-stroke:0.12px #4a4a4a;">Voltage "V1.1"</div><div class="t" style="left:500.00px;top:235.41px;font-size:10.5px;line-height:10.5px;color:#4a4a4a;font-weight:normal;font-style:normal;letter-spacing:0px;-webkit-text-stroke:0.15px #4a4a4a;">1,094 mV</div><div class="t" style="left:654.20px;top:193.34px;font-size:10.35px;line-height:10.35px;color:#4a4a4a;font-weight:normal;font-style:normal;letter-spacing:0px;-webkit-text-stroke:0.12px #4a4a4a;">Voltage "V3.3"</div><div class="t" style="left:654.00px;top:235.41px;font-size:10.5px;line-height:10.5px;color:#4a4a4a;font-weight:normal;font-style:normal;letter-spacing:0px;-webkit-text-stroke:0.15px #4a4a4a;">3,327 mV</div><div class="t" style="left:59.30px;top:393.05px;font-size:12.7px;line-height:12.7px;color:#1a1d3d;font-weight:normal;font-style:normal;letter-spacing:0px;-webkit-text-stroke:0.45px #1a1d3d;">Channel</div><div class="t" style="left:252.60px;top:393.05px;font-size:12.7px;line-height:12.7px;color:#1a1d3d;font-weight:normal;font-style:normal;letter-spacing:0px;-webkit-text-stroke:0.45px #1a1d3d;">ID</div><div class="t" style="right:583.00px;text-align:right;top:392.80px;font-size:13px;line-height:13px;color:#1a1d3d;font-weight:normal;font-style:normal;letter-spacing:0px;-webkit-text-stroke:0.45px #1a1d3d;">Last</div><div class="t" style="right:598.80px;text-align:right;top:407.68px;font-size:12.9px;line-height:12.9px;color:#1a1d3d;font-weight:normal;font-style:normal;letter-spacing:0px;-webkit-text-stroke:0.45px #1a1d3d;">Value</div><div class="t" style="left:521.80px;top:392.54px;font-size:13.3px;line-height:13.3px;color:#1a1d3d;font-weight:normal;font-style:normal;letter-spacing:0px;-webkit-text-stroke:0.45px #1a1d3d;">Minimum</div><div class="t" style="left:741.50px;top:392.63px;font-size:13.2px;line-height:13.2px;color:#1a1d3d;font-weight:normal;font-style:normal;letter-spacing:0px;-webkit-text-stroke:0.45px #1a1d3d;">Maximum</div><div class="t" style="left:59.30px;top:440.56px;font-size:12.8px;line-height:12.8px;color:#555;font-weight:normal;font-style:normal;letter-spacing:0px;">Downtime</div><div class="t" style="right:673.00px;text-align:right;top:440.56px;font-size:12.8px;line-height:12.8px;color:#555;font-weight:normal;font-style:normal;letter-spacing:0px;">-4</div><div class="t" style="left:59.30px;top:473.56px;font-size:12.8px;line-height:12.8px;color:#555;font-weight:normal;font-style:normal;letter-spacing:0px;">Fan "Internal Fan"</div><div class="t" style="right:673.00px;text-align:right;top:473.56px;font-size:12.8px;line-height:12.8px;color:#555;font-weight:normal;font-style:normal;letter-spacing:0px;">2</div><div class="t" style="right:583.00px;text-align:right;top:473.73px;font-size:12.6px;line-height:12.6px;color:#555;font-weight:normal;font-style:normal;letter-spacing:0px;">721 RPM</div><div class="t" style="right:361.00px;text-align:right;top:473.73px;font-size:12.6px;line-height:12.6px;color:#555;font-weight:normal;font-style:normal;letter-spacing:0px;">721 RPM</div><div class="t" style="right:138.00px;text-align:right;top:473.73px;font-size:12.6px;line-height:12.6px;color:#555;font-weight:normal;font-style:normal;letter-spacing:0px;">721 RPM</div><div class="t" style="left:59.30px;top:506.56px;font-size:12.8px;line-height:12.8px;color:#555;font-weight:normal;font-style:normal;letter-spacing:0px;">RAID Status</div><div class="t" style="right:673.00px;text-align:right;top:506.56px;font-size:12.8px;line-height:12.8px;color:#555;font-weight:normal;font-style:normal;letter-spacing:0px;">0</div><div class="t" style="right:583.00px;text-align:right;top:506.73px;font-size:12.6px;line-height:12.6px;color:#555;font-weight:normal;font-style:normal;letter-spacing:0px;">Normal</div><div class="t" style="right:361.00px;text-align:right;top:506.73px;font-size:12.6px;line-height:12.6px;color:#555;font-weight:normal;font-style:normal;letter-spacing:0px;">Normal</div><div class="t" style="right:138.00px;text-align:right;top:506.73px;font-size:12.6px;line-height:12.6px;color:#555;font-weight:normal;font-style:normal;letter-spacing:0px;">Normal</div><div class="t" style="left:59.30px;top:539.56px;font-size:12.8px;line-height:12.8px;color:#555;font-weight:normal;font-style:normal;letter-spacing:0px;">Temperature "CPU"</div><div class="t" style="right:673.00px;text-align:right;top:539.56px;font-size:12.8px;line-height:12.8px;color:#555;font-weight:normal;font-style:normal;letter-spacing:0px;">3</div><div class="t" style="right:583.00px;text-align:right;top:539.73px;font-size:12.6px;line-height:12.6px;color:#555;font-weight:normal;font-style:normal;letter-spacing:0px;">0 °C</div><div class="t" style="left:59.30px;top:572.56px;font-size:12.8px;line-height:12.8px;color:#555;font-weight:normal;font-style:normal;letter-spacing:0px;">Temperature "Drives"</div><div class="t" style="right:673.00px;text-align:right;top:572.56px;font-size:12.8px;line-height:12.8px;color:#555;font-weight:normal;font-style:normal;letter-spacing:0px;">4</div><div class="t" style="right:583.00px;text-align:right;top:572.73px;font-size:12.6px;line-height:12.6px;color:#555;font-weight:normal;font-style:normal;letter-spacing:0px;">0 °C</div><div class="t" style="left:59.30px;top:605.56px;font-size:12.8px;line-height:12.8px;color:#555;font-weight:normal;font-style:normal;letter-spacing:0px;">Temperature "System"</div><div class="t" style="right:673.00px;text-align:right;top:605.56px;font-size:12.8px;line-height:12.8px;color:#555;font-weight:normal;font-style:normal;letter-spacing:0px;">6</div><div class="t" style="right:583.00px;text-align:right;top:605.73px;font-size:12.6px;line-height:12.6px;color:#555;font-weight:normal;font-style:normal;letter-spacing:0px;">37 °C</div><div class="t" style="right:361.00px;text-align:right;top:605.73px;font-size:12.6px;line-height:12.6px;color:#555;font-weight:normal;font-style:normal;letter-spacing:0px;">37 °C</div><div class="t" style="right:138.00px;text-align:right;top:605.73px;font-size:12.6px;line-height:12.6px;color:#555;font-weight:normal;font-style:normal;letter-spacing:0px;">37 °C</div><div class="t" style="left:59.30px;top:638.56px;font-size:12.8px;line-height:12.8px;color:#555;font-weight:normal;font-style:normal;letter-spacing:0px;">Voltage "System Voltage (…</div><div class="t" style="right:673.00px;text-align:right;top:638.56px;font-size:12.8px;line-height:12.8px;color:#555;font-weight:normal;font-style:normal;letter-spacing:0px;">5</div><div class="t" style="right:583.00px;text-align:right;top:638.73px;font-size:12.6px;line-height:12.6px;color:#555;font-weight:normal;font-style:normal;letter-spacing:0px;">0 mV</div><div class="t" style="left:59.30px;top:671.56px;font-size:12.8px;line-height:12.8px;color:#555;font-weight:normal;font-style:normal;letter-spacing:0px;">Voltage "V1.1"</div><div class="t" style="right:673.00px;text-align:right;top:671.56px;font-size:12.8px;line-height:12.8px;color:#555;font-weight:normal;font-style:normal;letter-spacing:0px;">7</div><div class="t" style="right:583.00px;text-align:right;top:671.73px;font-size:12.6px;line-height:12.6px;color:#555;font-weight:normal;font-style:normal;letter-spacing:0px;">1,094 mV</div><div class="t" style="right:361.00px;text-align:right;top:671.73px;font-size:12.6px;line-height:12.6px;color:#555;font-weight:normal;font-style:normal;letter-spacing:0px;">1,094 mV</div><div class="t" style="right:138.00px;text-align:right;top:671.73px;font-size:12.6px;line-height:12.6px;color:#555;font-weight:normal;font-style:normal;letter-spacing:0px;">1,094 mV</div><div class="t" style="left:59.30px;top:704.56px;font-size:12.8px;line-height:12.8px;color:#555;font-weight:normal;font-style:normal;letter-spacing:0px;">Voltage "V3.3"</div><div class="t" style="right:673.00px;text-align:right;top:704.56px;font-size:12.8px;line-height:12.8px;color:#555;font-weight:normal;font-style:normal;letter-spacing:0px;">8</div><div class="t" style="right:583.00px;text-align:right;top:704.73px;font-size:12.6px;line-height:12.6px;color:#555;font-weight:normal;font-style:normal;letter-spacing:0px;">3,327 mV</div><div class="t" style="right:361.00px;text-align:right;top:704.73px;font-size:12.6px;line-height:12.6px;color:#555;font-weight:normal;font-style:normal;letter-spacing:0px;">3,327 mV</div><div class="t" style="right:138.00px;text-align:right;top:704.73px;font-size:12.6px;line-height:12.6px;color:#555;font-weight:normal;font-style:normal;letter-spacing:0px;">3,327 mV</div>
</body></html>
